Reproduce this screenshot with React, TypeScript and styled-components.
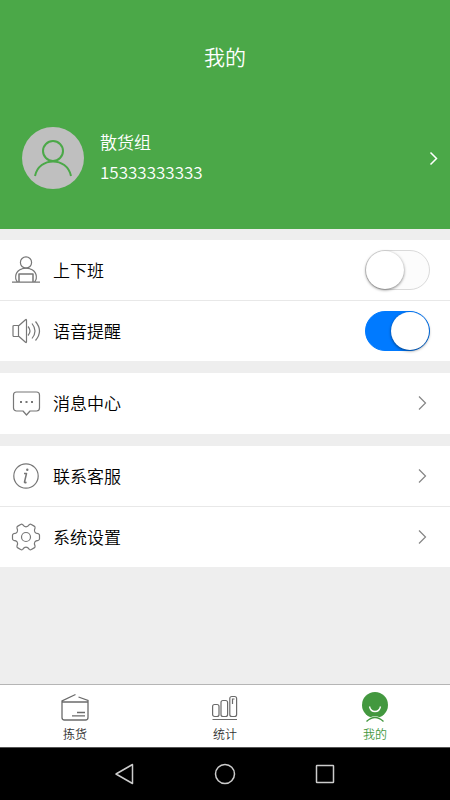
import React, { useState } from 'react';
import styled, { createGlobalStyle } from 'styled-components';

const green = '#4ba848';

const GlobalStyle = createGlobalStyle`
  *, *::before { box-sizing: border-box; }
  body {
    margin: 0;
    background: #eeeeee;
    color: #000;
    font-family: "Noto Sans CJK SC", "Noto Sans", sans-serif;
    font-size: 17px;
    font-weight: 350;
  }
  svg { display: block; fill: none; flex: none; }
`;

const Screen = styled.div`
  display: flex;
  flex-direction: column;
  min-height: 100vh;
`;

const Header = styled.header`
  background: ${green};
  color: #fff;
  padding: 40px 0;
`;

const Title = styled.h1`
  margin: 0;
  font-size: 21px;
  font-weight: 350;
  line-height: 32px;
  text-align: center;
`;

const PlainButton = styled.button`
  border: 0;
  background: none;
  color: inherit;
  font: inherit;
  cursor: pointer;
`;

const Profile = styled(PlainButton)`
  display: flex;
  align-items: center;
  gap: 16px;
  width: 100%;
  margin-top: 55px;
  padding: 0 10px 0 22px;
  text-align: left;
`;

const Avatar = styled.span`
  width: 62px;
  height: 62px;
  border-radius: 50%;
  background: #bfbfbf;
  color: ${green};
`;

const ProfileText = styled.span`
  flex: 1;
  display: flex;
  flex-direction: column;
  height: 62px;
  line-height: 30px;
`;

const Main = styled.main`
  flex: 1;
  display: flex;
  flex-direction: column;
  gap: 12px;
  padding: 11px 0 12px;
`;

const Group = styled.section`
  min-height: 61px;
  background: #fff;

  > * + * { border-top: 1px solid #e8e8e8; }
`;

const rowStyle = `
  display: flex;
  align-items: center;
  width: 100%;
  gap: 12px;
  padding: 0 20px 0 11px;
  line-height: 60px;
  text-align: left;
`;

const SwitchRow = styled.label`${rowStyle}`;

const LinkRow = styled.a`
  ${rowStyle}
  color: inherit;
  text-decoration: none;
`;

const RowLabel = styled.span`flex: 1;`;

const Switch = styled.input`
  appearance: none;
  flex: none;
  width: 65px;
  height: 40px;
  margin: 0;
  border: 1px solid #dadada;
  border-radius: 20px;
  background: #fcfcfc;
  cursor: pointer;

  &::before {
    content: "";
    display: block;
    width: 38px;
    height: 38px;
    border-radius: 50%;
    background: #fff;
    box-shadow: 0 1px 3px rgba(0, 0, 0, 0.5);
  }

  &:checked {
    border-color: #007aff;
    background: #007aff;
  }

  &:checked::before { margin-left: auto; }
`;

const TabBar = styled.nav`
  display: grid;
  grid-template-columns: repeat(3, 1fr);
  height: 63px;
  border-top: 1px solid #b5b5b5;
  background: #fff;
`;

const Tab = styled.a<{ $active?: boolean }>`
  display: flex;
  flex-direction: column;
  align-items: center;
  padding-top: 6px;
  color: ${(p) => (p.$active ? '#43983f' : '#333')};
  font-size: 12px;
  line-height: 14px;
  text-decoration: none;
`;

const SystemBar = styled.footer`
  display: flex;
  justify-content: center;
  gap: 70px;
  height: 53px;
  border-top: 1px solid #555;
  background: #000;
  color: #ccc;
`;

const SystemButton = styled(PlainButton)`
  display: grid;
  place-items: center;
  width: 30px;
  padding: 0;
`;

const Chevron = ({ light }: { light?: boolean }) => (
  <svg width="16" height="16" viewBox="0 0 16 16" stroke={light ? '#fff' : '#858585'} strokeWidth={light ? 1.5 : 1.2} aria-hidden="true">
    {light ? <path d="M6.500 2.500 12.500 8.500 6.500 14.500" /> : <path d="M5 1.500 11.500 8 5 14.500" />}
  </svg>
);

const RowIcon = ({ children }: { children: React.ReactNode }) => (
  <svg width="30" height="30" viewBox="0 0 30 30" stroke="#777" strokeWidth="1.2" strokeLinejoin="round" aria-hidden="true">
    {children}
  </svg>
);

const DutyIcon = () => (
  <RowIcon>
    <circle cx="15" cy="7.500" r="5.600" />
    <path d="M1 27.200h28M6.500 27C3 23 4.500 15.500 11 13.800q4-1.500 8 0C25.500 15.500 27 23 23.500 27" />
    <path d="M8 27v-8h14v8" strokeWidth="1.500" />
  </RowIcon>
);

const SpeakerIcon = () => (
  <RowIcon>
    <path d="M8 20.500H3a1 1 0 0 1-1-1v-9a1 1 0 0 1 1-1h5l6.500-5.800q1-.8 1 .5v21.600q0 1.300-1 .5zM7.500 9.500v11" />
    <path d="M17 10.500q4 4.500 0 9M21 7.500q6 7.500 0 15M24.500 5.500q8 9.500 0 19" />
  </RowIcon>
);

const MessageIcon = () => (
  <RowIcon>
    <path d="M5.500 4h20a3 3 0 0 1 3 3v13a3 3 0 0 1-3 3H19l-3.500 4-3.500-4H5.500a3 3 0 0 1-3-3V7a3 3 0 0 1 3-3z" />
    <path d="M9 14h2M14.500 14h2M20 14h2" strokeWidth="1.800" />
  </RowIcon>
);

const InfoIcon = () => (
  <RowIcon>
    <circle cx="15" cy="15" r="12.200" />
    <path d="M13 12.500h2.500l-2 8.500q-.2 1.200 2 .2" strokeWidth="1.500" />
    <circle cx="16.300" cy="8.800" r=".6" fill="#777" />
  </RowIcon>
);

const polar = (radius: number, degrees: number) => {
  const a = (degrees * Math.PI) / 180;
  return `${(15 + radius * Math.cos(a)).toFixed(2)} ${(15 + radius * Math.sin(a)).toFixed(2)}`;
};

const gearPath =
  [0, 60, 120, 180, 240, 300]
    .map((a, i) =>
      `${i ? 'L' : 'M'}${polar(12.8, a - 15)}Q${polar(13.8, a - 12)} ${polar(13.6, a - 7)}L${polar(13.6, a + 7)}Q${polar(13.8, a + 12)} ${polar(12.8, a + 15)}C${polar(9.5, a + 22)} ${polar(9.5, a + 38)} ${polar(12.8, a + 45)}`)
    .join('') + 'Z';

const GearIcon = () => (
  <RowIcon>
    <path d={gearPath} />
    <circle cx="15" cy="15" r="4.500" />
  </RowIcon>
);

const PickIcon = () => (
  <svg width="32" height="36" viewBox="0 0 32 36" stroke="#6b6b6b" strokeWidth="1.300" aria-hidden="true">
    <path d="M3 11h26v15.500a2.500 2.500 0 0 1-2.500 2.500h-21A2.500 2.500 0 0 1 3 26.500zM3 11v-1l13.500-6.500M19.500 6 29 9.500V11" />
    <path d="M18 21.500h8M13 24.800h13" />
  </svg>
);

const StatsIcon = () => (
  <svg width="32" height="36" viewBox="0 0 32 36" stroke="#6b6b6b" strokeWidth="1.200" aria-hidden="true">
    <rect x="3.600" y="13.500" width="6.400" height="12" rx="2" />
    <rect x="12" y="9.500" width="6.600" height="16" rx="2" />
    <rect x="20.800" y="5.500" width="6.800" height="20" rx="2" />
    <path d="M23.500 13V8h2M3.500 28.500h24.500" />
  </svg>
);

const MineIcon = () => (
  <svg width="32" height="36" viewBox="0 0 32 36" aria-hidden="true">
    <circle cx="16" cy="14" r="13" fill="#43983f" />
    <path d="M10.500 15.500q1 5 5.500 5t5.500-5" stroke="#fff" strokeWidth="1.300" />
    <path d="M6.500 31q9.500-8.500 19 0" stroke="#fff" strokeWidth="3" />
    <path d="M7.500 30.500q8.500-8 17 0" stroke="#43983f" strokeWidth="1.400" />
  </svg>
);

export default function App() {
  const [onDuty, setOnDuty] = useState(false);
  const [voice, setVoice] = useState(true);

  return (
    <Screen>
      <GlobalStyle />
      <Header>
        <Title>我的</Title>
        <Profile type="button">
          <Avatar>
            <svg width="62" height="62" viewBox="0 0 62 62" stroke="currentColor" strokeWidth="2" aria-hidden="true">
              <circle cx="31" cy="24" r="10" />
              <path d="M13 49C17 29.500 45 29.500 49 49" />
            </svg>
          </Avatar>
          <ProfileText>
            <span>散货组</span>
            <span>15333333333</span>
          </ProfileText>
          <Chevron light />
        </Profile>
      </Header>
      <Main>
        <Group>
          <SwitchRow>
            <DutyIcon />
            <RowLabel>上下班</RowLabel>
            <Switch type="checkbox" role="switch" checked={onDuty} onChange={(e) => setOnDuty(e.target.checked)} />
          </SwitchRow>
          <SwitchRow>
            <SpeakerIcon />
            <RowLabel>语音提醒</RowLabel>
            <Switch type="checkbox" role="switch" checked={voice} onChange={(e) => setVoice(e.target.checked)} />
          </SwitchRow>
        </Group>
        <Group>
          <LinkRow href="#messages"><MessageIcon /><RowLabel>消息中心</RowLabel><Chevron /></LinkRow>
        </Group>
        <Group>
          <LinkRow href="#support"><InfoIcon /><RowLabel>联系客服</RowLabel><Chevron /></LinkRow>
          <LinkRow href="#settings"><GearIcon /><RowLabel>系统设置</RowLabel><Chevron /></LinkRow>
        </Group>
      </Main>
      <TabBar>
        <Tab href="#pick"><PickIcon />拣货</Tab>
        <Tab href="#stats"><StatsIcon />统计</Tab>
        <Tab href="#mine" $active aria-current="page"><MineIcon />我的</Tab>
      </TabBar>
      <SystemBar>
        <SystemButton type="button" aria-label="返回">
          <svg width="24" height="24" viewBox="0 0 24 24" stroke="currentColor" strokeWidth="1.500" strokeLinejoin="round"><path d="M19.500 2.500v19L3 12z" /></svg>
        </SystemButton>
        <SystemButton type="button" aria-label="主页">
          <svg width="24" height="24" viewBox="0 0 24 24" stroke="currentColor" strokeWidth="1.500"><circle cx="12" cy="12" r="9.500" /></svg>
        </SystemButton>
        <SystemButton type="button" aria-label="最近任务">
          <svg width="24" height="24" viewBox="0 0 24 24" stroke="currentColor" strokeWidth="1.500"><rect x="3.500" y="3.500" width="17" height="17" rx=".5" /></svg>
        </SystemButton>
      </SystemBar>
    </Screen>
  );
}
